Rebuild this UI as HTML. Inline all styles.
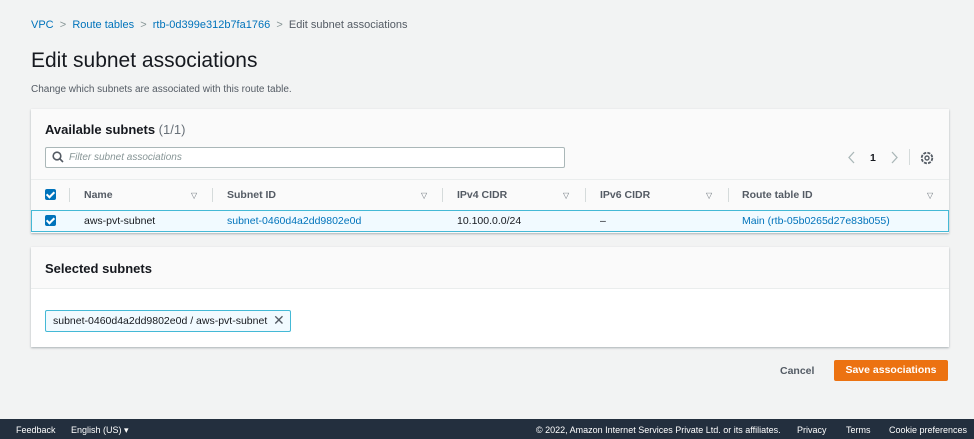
<!DOCTYPE html><html><head><style>
*{box-sizing:border-box;margin:0;padding:0}
body{width:974px;height:439px;background:#f2f3f3;font-family:"Liberation Sans",Arial,sans-serif;position:relative;overflow:hidden;color:#16191f}
.a{position:absolute;white-space:nowrap}
.l{color:#0073bb}
.s{font-size:10.5px}
.cb{position:absolute;width:11px;height:11px;background:#0073bb;border-radius:2px}
.cb:after{content:"";position:absolute;left:3px;top:1px;width:3px;height:6px;border:solid #fff;border-width:0 2px 2px 0;transform:rotate(45deg)}
.th{font-size:10.5px;font-weight:bold;color:#545b64}
.tri{font-size:8px;color:#687078}
.sep{position:absolute;width:1px;height:14px;background:#d5dbdb;top:188px}
</style></head><body>
<div class="a" style="left:31px;top:19px;color:#545b64;font-size:11px"><span class="l">VPC</span> &nbsp;<span style="color:#879596">&gt;</span>&nbsp; <span class="l">Route tables</span> &nbsp;<span style="color:#879596">&gt;</span>&nbsp; <span class="l">rtb-0d399e312b7fa1766</span> &nbsp;<span style="color:#879596">&gt;</span>&nbsp; Edit subnet associations</div>
<div class="a" style="left:31px;top:49px;font-size:21px">Edit subnet associations</div>
<div class="a" style="left:31px;top:84px;font-size:10px;color:#545b64">Change which subnets are associated with this route table.</div>
<div class="a" style="left:31px;top:109px;width:918px;height:124px;background:#fafafa;box-shadow:0 1px 2px rgba(0,28,36,.3)"></div>
<div class="a" style="left:45px;top:122px;font-size:13px;font-weight:bold">Available subnets <span style="font-weight:normal;color:#687078">(1/1)</span></div>
<div class="a" style="left:45px;top:147px;width:520px;height:21px;border:1px solid #aab7b8;background:#fff;border-radius:2px"></div>
<svg class="a" style="left:52px;top:151px" width="12" height="12" viewBox="0 0 12 12"><circle cx="5" cy="5" r="3.8" fill="none" stroke="#545b64" stroke-width="1.6"/><path d="M7.8 7.8L11 11" stroke="#545b64" stroke-width="1.6"/></svg>
<div class="a" style="left:69px;top:152px;font-size:10px;font-style:italic;color:#879596">Filter subnet associations</div>
<svg class="a" style="left:847px;top:151px" width="10" height="13" viewBox="0 0 10 13"><path d="M7 1L2 6.5L7 12" fill="none" stroke="#aab7b8" stroke-width="1.3"/></svg>
<div class="a" style="left:870px;top:152px;font-size:10.5px;font-weight:bold">1</div>
<svg class="a" style="left:889px;top:151px" width="10" height="13" viewBox="0 0 10 13"><path d="M3 1L8 6.5L3 12" fill="none" stroke="#aab7b8" stroke-width="1.3"/></svg>
<div class="a" style="left:909px;top:149px;width:1px;height:16px;background:#d5dbdb"></div>
<svg class="a" style="left:920px;top:151px" width="14" height="14" viewBox="0 0 14 14"><circle cx="7" cy="7" r="5.3" fill="none" stroke="#545b64" stroke-width="1.8" stroke-dasharray="3 1.2"/><circle cx="7" cy="7" r="2" fill="none" stroke="#545b64" stroke-width="1.4"/></svg>
<div class="a" style="left:31px;top:179px;width:918px;height:1px;background:#eaeded"></div>
<div class="cb" style="left:45px;top:189px"></div>
<div class="sep" style="left:69px"></div><div class="sep" style="left:212px"></div><div class="sep" style="left:442px"></div><div class="sep" style="left:585px"></div><div class="sep" style="left:728px"></div>
<div class="a th" style="left:84px;top:189px">Name</div><div class="a tri" style="left:191px;top:191px">&#9661;</div>
<div class="a th" style="left:227px;top:189px">Subnet ID</div><div class="a tri" style="left:421px;top:191px">&#9661;</div>
<div class="a th" style="left:457px;top:189px">IPv4 CIDR</div><div class="a tri" style="left:563px;top:191px">&#9661;</div>
<div class="a th" style="left:600px;top:189px">IPv6 CIDR</div><div class="a tri" style="left:706px;top:191px">&#9661;</div>
<div class="a th" style="left:742px;top:189px">Route table ID</div><div class="a tri" style="left:927px;top:191px">&#9661;</div>
<div class="a" style="left:31px;top:210px;width:918px;height:22px;background:#f1faff;border:1px solid #44b9d6"></div>
<div class="cb" style="left:45px;top:215px"></div>
<div class="a s" style="left:84px;top:215px">aws-pvt-subnet</div>
<div class="a s l" style="left:227px;top:215px">subnet-0460d4a2dd9802e0d</div>
<div class="a s" style="left:457px;top:215px">10.100.0.0/24</div>
<div class="a s" style="left:600px;top:215px">–</div>
<div class="a s l" style="left:742px;top:215px">Main (rtb-05b0265d27e83b055)</div>
<div class="a" style="left:31px;top:247px;width:918px;height:100px;background:#fff;box-shadow:0 1px 2px rgba(0,28,36,.3)"></div>
<div class="a" style="left:31px;top:247px;width:918px;height:42px;background:#fafafa;border-bottom:1px solid #eaeded"></div>
<div class="a" style="left:45px;top:261px;font-size:13px;font-weight:bold">Selected subnets</div>
<div class="a" style="left:45px;top:310px;width:246px;height:22px;background:#f1faff;border:1px solid #44b9d6;border-radius:2px"></div>
<div class="a" style="left:53px;top:315px;font-size:10.5px">subnet-0460d4a2dd9802e0d / aws-pvt-subnet</div>
<div class="a" style="left:273px;top:312px;font-size:14px;color:#545b64">&#10005;</div>
<div class="a" style="left:780px;top:365px;font-size:10.5px;font-weight:bold;color:#545b64">Cancel</div>
<div class="a" style="left:834px;top:360px;width:114px;height:21px;background:#ec7211;color:#fff;font-size:10.5px;font-weight:bold;text-align:center;line-height:21px;border-radius:2px">Save associations</div>
<div class="a" style="left:0;top:419px;width:974px;height:20px;background:#232f3e"></div>
<div class="a" style="left:16px;top:425px;font-size:9px;color:#fff">Feedback</div>
<div class="a" style="left:71px;top:425px;font-size:9px;color:#fff">English (US) &#9662;</div>
<div class="a" style="left:536px;top:425px;font-size:9px;color:#fff">© 2022, Amazon Internet Services Private Ltd. or its affiliates.</div>
<div class="a" style="left:797px;top:425px;font-size:9px;color:#fff">Privacy</div>
<div class="a" style="left:846px;top:425px;font-size:9px;color:#fff">Terms</div>
<div class="a" style="left:889px;top:425px;font-size:9px;color:#fff">Cookie preferences</div>
</body></html>
